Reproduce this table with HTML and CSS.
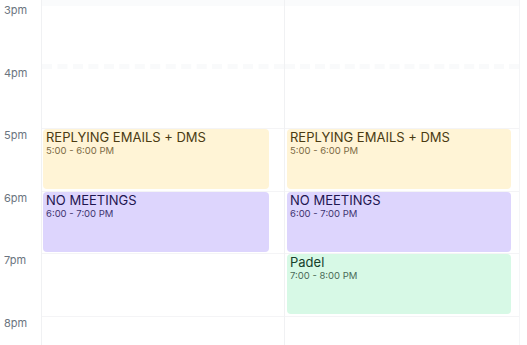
FILE: index.html
```html
<!DOCTYPE html>
<html>
<head>
<meta charset="utf-8">
<link rel="stylesheet" href="styles.css">
</head>
<body>
<div class="cal">
  <div class="times">
    <div class="label">3pm</div>
    <div class="label">4pm</div>
    <div class="label">5pm</div>
    <div class="label">6pm</div>
    <div class="label">7pm</div>
    <div class="label">8pm</div>
  </div>
  <div class="day">
    <div class="slot"></div>
    <div class="slot"></div>
    <div class="slot"></div>
    <div class="slot"></div>
    <div class="slot"></div>
    <div class="slot"></div>
    <div class="event yellow r5">
      <div class="title">REPLYING EMAILS + DMS</div>
      <div class="time">5:00 - 6:00 PM</div>
    </div>
    <div class="event purple r6">
      <div class="title">NO MEETINGS</div>
      <div class="time">6:00 - 7:00 PM</div>
    </div>
  </div>
  <div class="day last">
    <div class="slot"></div>
    <div class="slot"></div>
    <div class="slot"></div>
    <div class="slot"></div>
    <div class="slot"></div>
    <div class="slot"></div>
    <div class="event yellow r5">
      <div class="title">REPLYING EMAILS + DMS</div>
      <div class="time">5:00 - 6:00 PM</div>
    </div>
    <div class="event purple r6">
      <div class="title">NO MEETINGS</div>
      <div class="time">6:00 - 7:00 PM</div>
    </div>
    <div class="event green r7">
      <div class="title">Padel</div>
      <div class="time">7:00 - 8:00 PM</div>
    </div>
  </div>
</div>
</body>
</html>
```
FILE: styles.css
```css
html, body {
  margin: 0;
  padding: 0;
  background: #ffffff;
  overflow: hidden;
}
body {
  font-family: Inter, "Noto Sans", sans-serif;
  width: 527px;
  height: 345px;
}
.cal {
  display: flex;
  height: 345px;
  overflow: hidden;
}
.times {
  width: 42px;
  flex: none;
  border-right: 1px solid #f0f1f3;
  display: grid;
  grid-template-rows: repeat(6, 62.5px);
  padding-top: 3px;
  box-sizing: border-box;
  align-content: start;
}
.label {
  font-size: 11px;
  line-height: 14px;
  color: #6b7480;
  padding-left: 4px;
}
.day {
  width: 243px;
  flex: none;
  border-right: 1px solid #f0f1f3;
  display: grid;
  grid-template-rows: repeat(6, 62.5px);
  grid-template-columns: 1fr;
  padding-top: 3px;
  box-sizing: border-box;
  align-content: start;
}
.day.last {
  width: 235px;
  border-right: 1px solid #f4f5f7;
}
.slot {
  grid-column: 1;
  border-top: 1px solid #f4f4f6;
}
.slot:nth-child(1) { grid-row: 1; border-top: 6px solid #fafbfc; margin-top: -3px; }
.slot:nth-child(2) { grid-row: 2; border-top: 5px dashed #f9fafb; margin-top: -2px; }
.slot:nth-child(3) { grid-row: 3; }
.slot:nth-child(4) { grid-row: 4; }
.slot:nth-child(5) { grid-row: 5; }
.slot:nth-child(6) { grid-row: 6; }
.event {
  grid-column: 1;
  margin: 1px 15px 1.5px 1px;
  border-radius: 4px;
  padding: 1px 3px;
  overflow: hidden;
}
.last .event {
  margin: 1px 8px 1.5px 2px;
}
.r5 { grid-row: 3; }
.r6 { grid-row: 4; }
.r7 { grid-row: 5; }
.title {
  font-size: 13px;
  line-height: 15px;
  font-weight: 400;
}
.time {
  font-size: 9.5px;
  line-height: 12px;
}
.yellow { background: #fff4d6; }
.yellow .title { color: #4a3b12; }
.yellow .time { color: #7c6a45; }
.purple { background: #ddd5fd; }
.purple .title { color: #1f1650; }
.purple .time { color: #3e3470; }
.green { background: #d7f9e6; }
.green .title { color: #16402c; }
.green .time { color: #4a6a58; }
```
